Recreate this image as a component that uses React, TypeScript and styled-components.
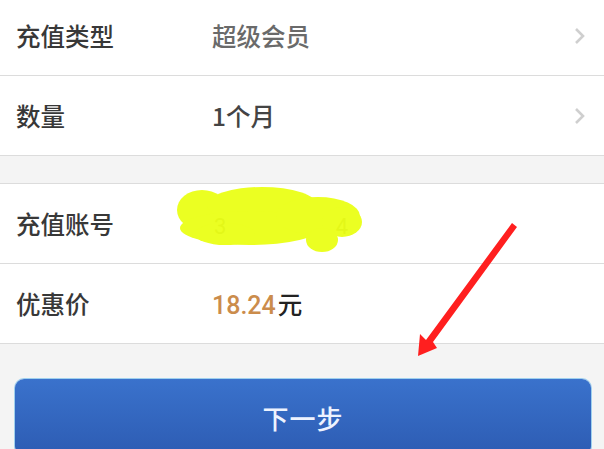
import styled, { createGlobalStyle } from "styled-components";

const GlobalStyle = createGlobalStyle`
  html, body {
    margin: 0;
    padding: 0;
    background: #f4f4f4;
    font-family: "Noto Sans CJK SC", "Noto Sans", sans-serif;
    overflow: hidden;
  }
`;

const Page = styled.div`
  position: relative;
  width: 604px;
  height: 449px;
  overflow: hidden;
  background: #f4f4f4;
`;

const Group = styled.section<{ $first?: boolean }>`
  background: #fff;
  border-top: ${(p) => (p.$first ? "none" : "1px solid #dcdcdc")};
  margin-top: ${(p) => (p.$first ? "-4px" : "27px")};
`;

const Row = styled.div`
  display: flex;
  align-items: center;
  height: 79px;
  border-bottom: 1px solid #dcdcdc;
  padding: 0 16px;
  font-size: 24.5px;
  font-weight: 500;
`;

const Label = styled.div`
  width: 196px;
  color: #383838;
`;

const Value = styled.div<{ $muted?: boolean }>`
  flex: 1;
  color: ${(p) => (p.$muted ? "#6a6a6a" : "#444")};
`;

const Price = styled.span`
  color: #cb8c4c;
  font-family: "Roboto", "Noto Sans", sans-serif;
  font-weight: 500;
  font-size: 25px;
`;

const Yuan = styled.span`
  color: #222;
  margin-left: 2px;
`;

const Account = styled.span`
  display: inline-flex;
  width: 134px;
  justify-content: space-between;
  color: #9a9a80;
  font-family: "Roboto", sans-serif;
  font-weight: 400;
  font-size: 22px;
  padding-left: 2px;
`;

const Chevron = styled.svg`
  width: 12px;
  height: 18px;
  margin-right: 2px;
`;

const Footer = styled.div`
  padding: 35px 13px 0 15px;
`;

const NextButton = styled.button`
  display: flex;
  align-items: center;
  justify-content: center;
  width: 100%;
  height: 76px;
  border: none;
  border-radius: 9px;
  background: linear-gradient(#3a72cc, #2d5cb3);
  box-shadow: 0 0 0 1px #9fd0ee;
  color: #eef3ff;
  font-family: "Noto Sans CJK SC", sans-serif;
  font-weight: 500;
  font-size: 26px;
  letter-spacing: 1px;
`;

const Overlay = styled.svg`
  position: absolute;
  left: 0;
  top: 0;
  pointer-events: none;
`;

const ChevronIcon = () => (
  <Chevron viewBox="0 0 12 18">
    <polyline points="2,2 9,9 2,16" fill="none" stroke="#cfcfcf" strokeWidth="2.6" />
  </Chevron>
);

const App = () => {
  return (
    <Page>
      <GlobalStyle />
      <Group $first>
        <Row>
          <Label>充值类型</Label>
          <Value $muted>超级会员</Value>
          <ChevronIcon />
        </Row>
        <Row>
          <Label>数量</Label>
          <Value>1个月</Value>
          <ChevronIcon />
        </Row>
      </Group>
      <Group>
        <Row>
          <Label>充值账号</Label>
          <Value>
            <Account>
              <span>3</span>
              <span>4</span>
            </Account>
          </Value>
        </Row>
        <Row>
          <Label>优惠价</Label>
          <Value>
            <Price>18.24</Price>
            <Yuan>元</Yuan>
          </Value>
        </Row>
      </Group>
      <Footer>
        <NextButton>下一步</NextButton>
      </Footer>

      <Overlay width="604" height="449" viewBox="0 0 604 449">
        <g fill="#eaff10" opacity="0.92">
          <ellipse cx="202" cy="210" rx="25" ry="20" />
          <ellipse cx="262" cy="205" rx="55" ry="18" />
          <ellipse cx="250" cy="228" rx="70" ry="17" />
          <ellipse cx="318" cy="216" rx="42" ry="19" />
          <ellipse cx="342" cy="222" rx="20" ry="15" />
          <ellipse cx="322" cy="240" rx="16" ry="12" />
          <ellipse cx="225" cy="234" rx="30" ry="11" />
        </g>
        <path d="M512 223 L517 227 L433 342 L437 348 L418 356 L420 334 L426 340 Z" fill="#ff1f1f" />
      </Overlay>
    </Page>
  );
};

export default App;
